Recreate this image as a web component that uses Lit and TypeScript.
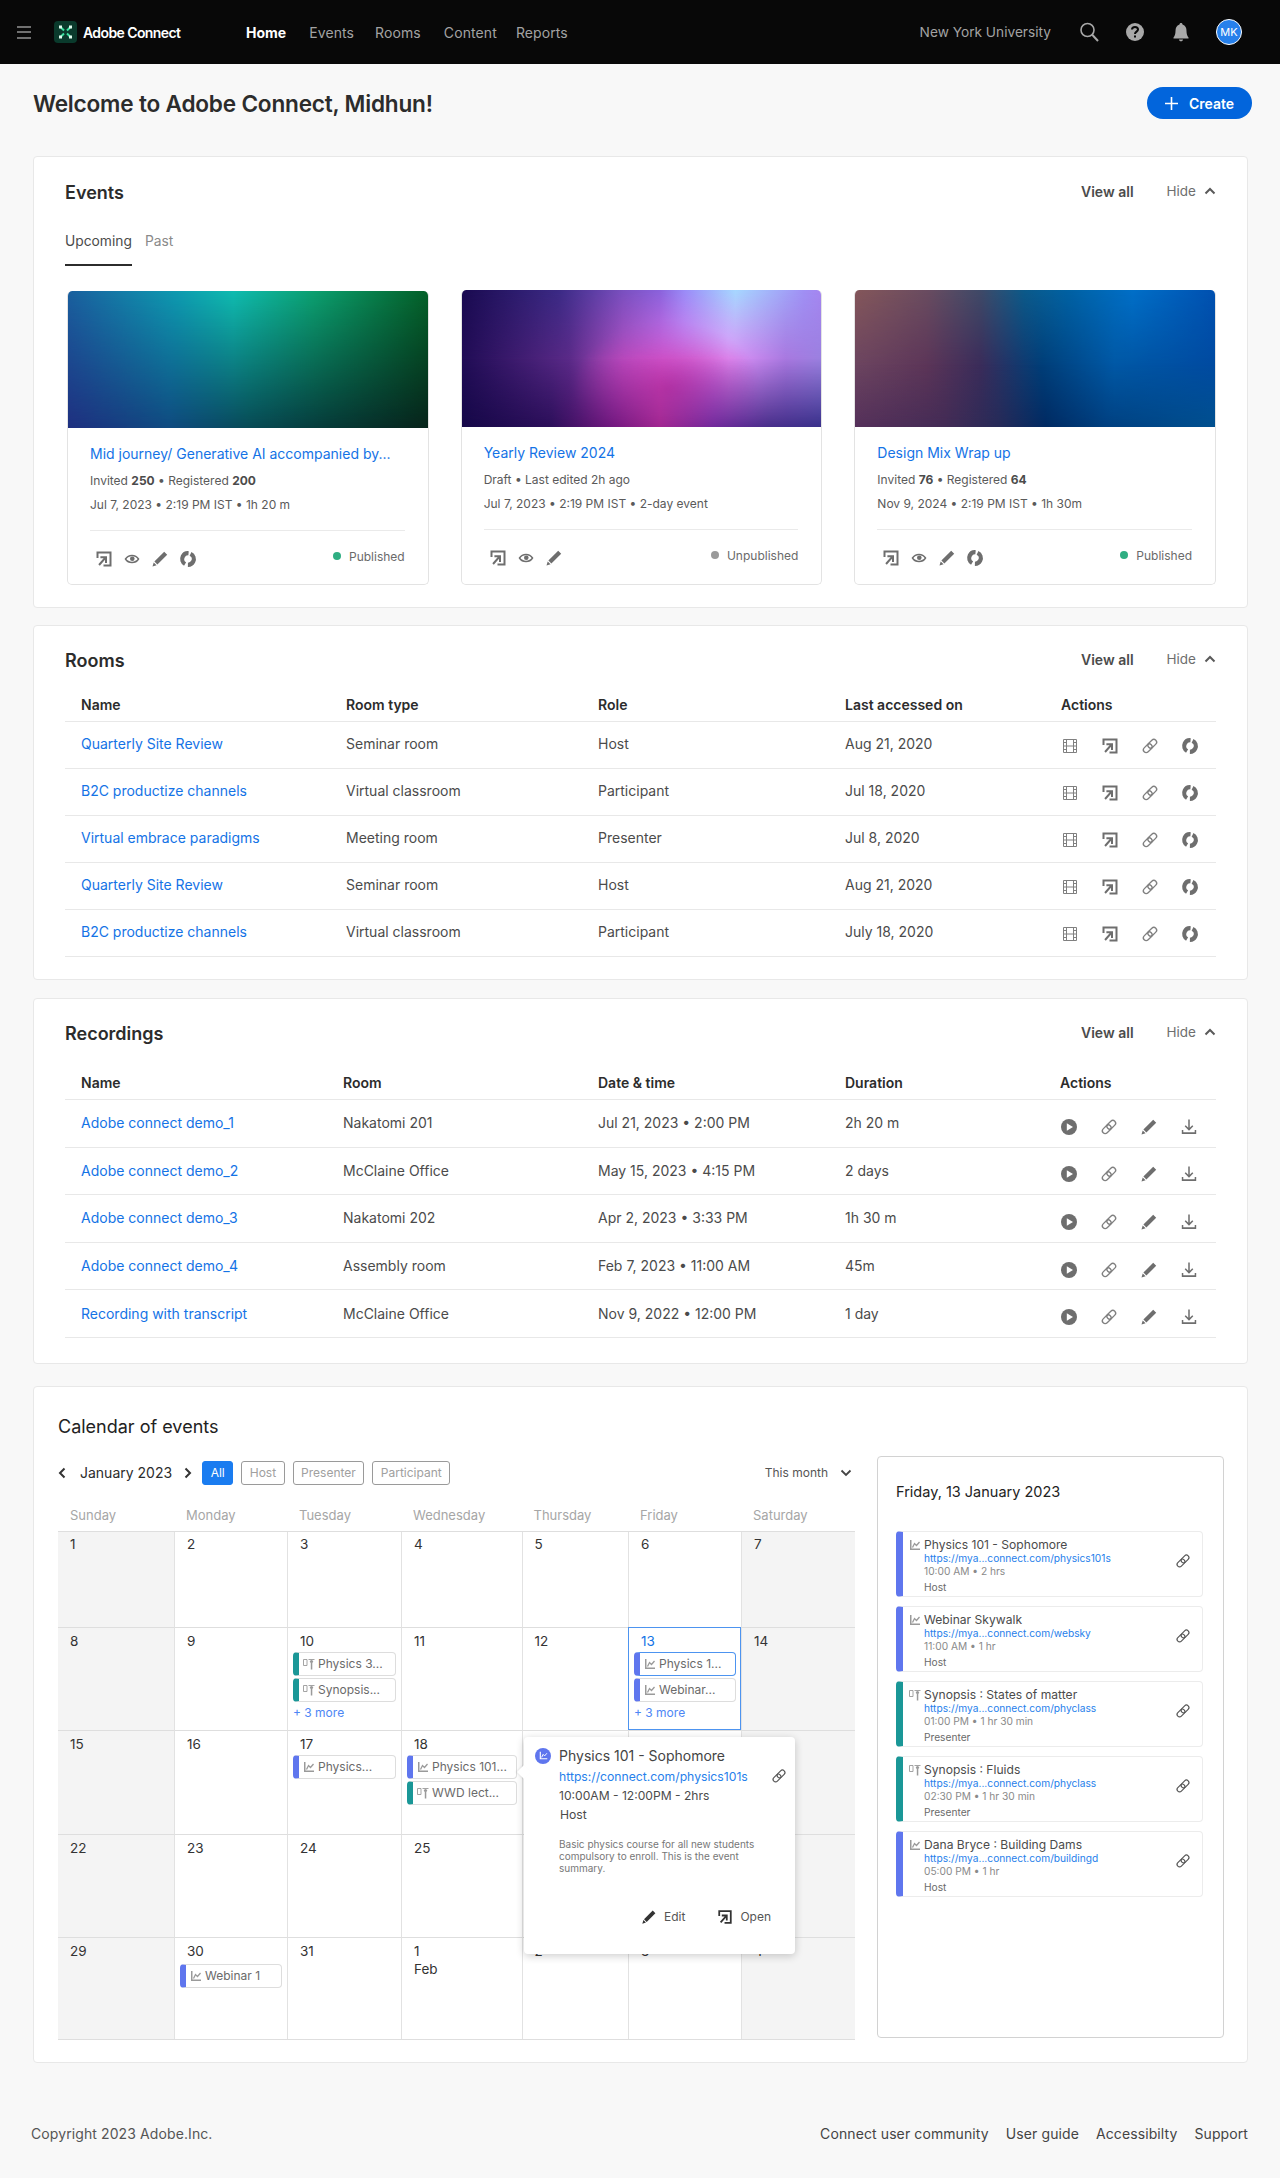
import { LitElement, html, css, svg, nothing } from "lit";
import { customElement } from "lit/decorators.js";

const ic = (body: unknown, cls = "ic") =>
  html`<svg class=${cls} viewBox="0 0 18 18" aria-hidden="true">${body}</svg>`;

const openIc = () =>
  ic(svg`<path d="M1.500 1.500h15v15H8.500v-2h6v-11h-11V8h-2z" fill="currentColor"/><path d="M12 6.300v6.700h-2V9.800l-5.200 5.900-1.500-1.400 5.300-6h-3.200v-2z" fill="currentColor"/>`);
const eyeIc = () =>
  ic(svg`<path d="M2.500 9C4 6.700 6.300 5.500 9 5.500s5 1.200 6.500 3.500C14 11.300 11.700 12.500 9 12.500S4 11.300 2.500 9z" fill="none" stroke="currentColor" stroke-width="1.500"/><circle cx="9.300" cy="8.800" r="2.300" fill="currentColor"/>`);
const pencilIc = () =>
  ic(svg`<path d="M13.200 1.800l3 3-9.800 9.800-3-3zM2.700 12.400l2.900 2.900-4.100 1.200z" fill="currentColor"/>`);
const publishIc = () =>
  ic(svg`<circle cx="9" cy="9" r="5.800" fill="none" stroke="currentColor" stroke-width="4.200" stroke-dasharray="15.200 3" transform="rotate(-64 9 9)"/>`);
const filmIc = () =>
  ic(svg`<path d="M2.500 2.500h13v13h-13zM5.500 2.500v13M12.500 2.500v13M5.500 9h7M2.500 5.500h3M2.500 9h3M2.500 12.500h3M12.500 5.500h3M12.500 9h3M12.500 12.500h3" fill="none" stroke="currentColor" stroke-width="1"/>`, "ic light");
const linkIc = (cls = "ic light") =>
  ic(svg`<g transform="rotate(-45 9 9)" fill="none" stroke="currentColor" stroke-width="1.300"><rect x="0.800" y="6.200" width="10" height="5.600" rx="2.800"/><rect x="7.200" y="6.200" width="10" height="5.600" rx="2.800"/></g>`, cls);
const playIc = () =>
  ic(svg`<circle cx="9" cy="9" r="8" fill="currentColor"/><path d="M6.800 5.200L13 9l-6.200 3.800z" fill="#fff"/>`);
const dlIc = () =>
  ic(svg`<path d="M9 1.500v10M5.200 7.800L9 11.600l3.800-3.800" fill="none" stroke="currentColor" stroke-width="1.500"/><path d="M1.800 12v4h14.400v-4h-1.500v2.200H3.300V12z" fill="currentColor"/>`);
const chartIc = () =>
  html`<svg class="ty" viewBox="0 0 12 12" aria-hidden="true"><path d="M1 1h1.500v8.500H11V11H1z" fill="currentColor"/><path d="M3.500 8.500L5.500 4.500l2 2 3-3.500" fill="none" stroke="currentColor" stroke-width="1.300"/></svg>`;
const presIc = () =>
  html`<svg class="ty" viewBox="0 0 12 12" aria-hidden="true"><path d="M.5 1.500h3.500v6H.5zM5.500 1.500h6" fill="none" stroke="currentColor" stroke-width=".9"/><circle cx="8.500" cy="3.500" r="1.600" fill="currentColor"/><path d="M7.800 5h1.500v6.500H7.800z" fill="currentColor"/></svg>`;

const rooms = [
  ["Quarterly Site Review", "Seminar room", "Host", "Aug 21, 2020"],
  ["B2C productize channels", "Virtual classroom", "Participant", "Jul 18, 2020"],
  ["Virtual embrace paradigms", "Meeting room", "Presenter", "Jul 8, 2020"],
  ["Quarterly Site Review", "Seminar room", "Host", "Aug 21, 2020"],
  ["B2C productize channels", "Virtual classroom", "Participant", "July 18, 2020"],
];
const recs = [
  ["Adobe connect demo_1", "Nakatomi 201", "Jul 21, 2023 • 2:00 PM", "2h 20 m"],
  ["Adobe connect demo_2", "McClaine Office", "May 15, 2023 • 4:15 PM", "2 days"],
  ["Adobe connect demo_3", "Nakatomi 202", "Apr 2, 2023 • 3:33 PM", "1h 30 m"],
  ["Adobe connect demo_4", "Assembly room", "Feb 7, 2023 • 11:00 AM", "45m"],
  ["Recording with transcript", "McClaine Office", "Nov 9, 2022 • 12:00 PM", "1 day"],
];
type Chip = { t: string; k: "a" | "b"; on?: boolean };
const chips: Record<string, Chip[]> = {
  "10": [{ t: "Physics 3...", k: "b" }, { t: "Synopsis...", k: "b" }],
  "13": [{ t: "Physics 1...", k: "a", on: true }, { t: "Webinar...", k: "a" }],
  "17": [{ t: "Physics...", k: "a" }],
  "18": [{ t: "Physics 101...", k: "a" }, { t: "WWD lect...", k: "b" }],
  "30": [{ t: "Webinar 1", k: "a" }],
};
const days = [
  "1","2","3","4","5","6","7","8","9","10","11","12","13","14","15","16","17","18","","","",
  "22","23","24","25","","","","29","30","31","1 Feb","2","3","4",
];
const agenda = [
  { k: "a", t: "Physics 101 - Sophomore", l: "https://mya...connect.com/physics101s", w: "10:00 AM • 2 hrs", r: "Host" },
  { k: "a", t: "Webinar Skywalk", l: "https://mya...connect.com/websky", w: "11:00 AM • 1 hr", r: "Host" },
  { k: "b", t: "Synopsis : States of matter", l: "https://mya...connect.com/phyclass", w: "01:00 PM • 1 hr 30 min", r: "Presenter" },
  { k: "b", t: "Synopsis : Fluids", l: "https://mya...connect.com/phyclass", w: "02:30 PM • 1 hr 30 min", r: "Presenter" },
  { k: "a", t: "Dana Bryce : Building Dams", l: "https://mya...connect.com/buildingd", w: "05:00 PM • 1 hr", r: "Host" },
];

@customElement("app-root")
export class AppRoot extends LitElement {
  static styles = css`
    :host { display: block; font-family: Inter, "Liberation Sans", sans-serif; background: #f8f8f8; color: #4b4b4b; height: 2178px; overflow: hidden; }
    * { box-sizing: border-box; }
    .ic { width: 18px; height: 18px; color: #6e6e6e; display: block; flex: none; }
    .ic.light { color: #808080; }
    .ty { width: 12px; height: 12px; color: #9a9a9a; flex: none; display: block; }
    a { color: #1473e6; text-decoration: none; }

    header { height: 64px; background: #080808; display: flex; align-items: center; color: #a3a3a3; font-size: 14px; }
    .burger { margin-left: 17px; width: 14px; height: 13px; border-top: 2px solid #707070; border-bottom: 2px solid #707070; position: relative; }
    .burger::after { content: ""; position: absolute; left: 0; right: 0; top: 3.5px; height: 2px; background: #707070; }
    .logo { margin-left: 23px; width: 23px; height: 22px; background: #0a3a2c; border-radius: 4px; display: block; }
    .brand { margin-left: 6px; color: #fff; font-weight: 600; font-size: 14px; letter-spacing: -.6px; width: 97px; white-space: nowrap; }
    nav { display: flex; margin-left: 66px; letter-spacing: .1px; }
    nav span { margin-right: 21px; }
    nav .on { color: #fff; font-weight: 700; margin-right: 23px; letter-spacing: 0; }
    nav span:nth-child(3) { margin-right: 23px; }
    nav span:nth-child(4) { margin-right: 19px; }
    .org { margin-left: auto; font-size: 13.700px; }
    .hi { color: #a8a8a8; width: 22px; height: 22px; display: block; flex: none; }
    .h1 { margin-left: 27px; } .h2 { margin-left: 24px; } .h3 { margin-left: 24px; }
    .avatar { margin: 0 38px 0 24px; width: 26px; height: 26px; border-radius: 50%; background: #2680eb; border: 1px solid #fff; color: #fff; font-size: 11px; display: flex; align-items: center; justify-content: center; }

    main { padding: 0 32px 0 33px; }
    .top { height: 92px; display: flex; align-items: center; justify-content: space-between; padding: 0 0 14px 0; }
    h1 { margin: 0; font-size: 22.600px; font-weight: 600; color: #2c2c2c; letter-spacing: -.2px; }
    .create { margin-right: -4px; width: 105px; height: 32px; border-radius: 16px; background: #0265dc; color: #fff; font-weight: 600; font-size: 14px; display: flex; align-items: center; padding-left: 18px; gap: 11px; }
    .create svg { width: 13px; height: 13px; display: block; }

    .card { background: #fff; border: 1px solid #e8e8e8; border-radius: 4px; padding: 23px 31px 22px 31px; margin-bottom: 17px; }
    .s-ev { padding-top: 24px; }
    .s-rm { margin-bottom: 18px; }
    .s-rc { padding-bottom: 25px; margin-bottom: 22px; }
    .hd { display: flex; align-items: center; height: 22px; }
    h2 { margin: 0; font-size: 18px; font-weight: 600; color: #2c2c2c; flex: 1; }
    .va { font-size: 14px; font-weight: 600; color: #4b4b4b; position: relative; top: -1px; }
    .hide { margin-left: 33px; font-size: 13.500px; color: #6e6e6e; display: flex; align-items: center; gap: 8px; position: relative; top: -1px; }
    .hide svg { width: 12px; height: 8px; display: block; }

    .tabs { display: flex; margin-top: 28px; font-size: 13.800px; line-height: 20px; }
    .tabs span { padding-bottom: 13px; height: 35px; margin-right: 13px; color: #8a8a8a; }
    .tabs .on { color: #4b4b4b; border-bottom: 2px solid #2c2c2c; }
    .evs { display: flex; gap: 32px; margin-top: 24px; padding: 0 0 0 2px; }
    .ev { width: 362px; height: 295px; border: 1px solid #e3e3e3; border-top: 0; border-radius: 5px; overflow: hidden; }
    .ev:first-child { margin-top: 1px; height: 294px; }
    .img { height: 137px; margin: 0 -1px; border-radius: 5px 5px 0 0; position: relative; overflow: hidden; }
    .img::before, .img::after { content: ""; position: absolute; inset: 0; }
    .img::after { -webkit-mask-image: linear-gradient(180deg, transparent 0%, #000 100%); mask-image: linear-gradient(180deg, transparent 0%, #000 100%); }
    .g1 { background: linear-gradient(90deg, #1a5f9e 0%, #0e9ab0 30%, #10bcb0 46%, #0ca070 68%, #046028 100%); }
    .g1::before { display: none; }
    .g1::after { background: linear-gradient(90deg, #1f2f80 0%, #0f4a80 28%, #074a55 50%, #063a38 72%, #07231a 100%); }
    .g2 { background: linear-gradient(90deg, #1a0a50 0%, #3b2a85 27%, #7a50c0 45%, #8a62dc 55%, #9a8cf8 62%, #a6d8ff 76%, #a090f5 95%, #a585f0 100%); }
    .g2::before { background:
      radial-gradient(ellipse 26% 50% at 57% 72%, rgba(195,58,178,1) 0%, rgba(195,58,178,0) 100%),
      linear-gradient(90deg, #200c55 0%, #5a2a88 30%, #b04fc0 45%, #d86ae0 56%, #e094f8 74%, #a878e0 90%, #9a80e0 100%);
      -webkit-mask-image: linear-gradient(180deg, transparent 0%, #000 50%); mask-image: linear-gradient(180deg, transparent 0%, #000 50%); }
    .g2::after { background: linear-gradient(90deg, #150848 0%, #2c0f5a 25%, #72187f 42%, #a0258f 55%, #70289a 70%, #482e8a 85%, #38308a 100%);
      -webkit-mask-image: linear-gradient(180deg, transparent 50%, #000 100%); mask-image: linear-gradient(180deg, transparent 50%, #000 100%); }
    .g3 { background: linear-gradient(90deg, #85575a 0%, #6a4c60 20%, #3f4a68 35%, #0c5a8a 47%, #0062a5 60%, #006fc8 77%, #0050b0 100%); }
    .g3::before { background: linear-gradient(90deg, #6c4560 0%, #5c3558 20%, #3a2c5a 35%, #0f3a70 47%, #003e78 52%, #0058a5 72%, #004aa0 100%);
      -webkit-mask-image: linear-gradient(180deg, transparent 0%, #000 55%); mask-image: linear-gradient(180deg, transparent 0%, #000 55%); }
    .g3::after { background: linear-gradient(90deg, #55305a 0%, #432b55 25%, #262a58 40%, #002a62 53%, #004080 70%, #00508f 100%);
      -webkit-mask-image: linear-gradient(180deg, transparent 55%, #000 100%); mask-image: linear-gradient(180deg, transparent 55%, #000 100%); }
    .evb { padding: 16px 23px 0 22px; }
    .ti { font-size: 14px; line-height: 20px; color: #1473e6; white-space: nowrap; }
    .l1, .l2 { font-size: 12px; line-height: 16px; color: #5a5a5a; white-space: nowrap; }
    .l1 { margin-top: 9px; } .l2 { margin-top: 8px; }
    .l1 b { font-weight: 700; color: #4b4b4b; }
    .div { height: 1px; background: #eaeaea; margin-top: 17px; }
    .foot { display: flex; align-items: center; margin-top: 19px; height: 18px; padding-left: 5px; gap: 10px; }
    .st { margin-left: auto; font-size: 12px; color: #6a6a6a; display: flex; align-items: center; gap: 8px; position: relative; top: -3px; }
    .st i { width: 8px; height: 8px; border-radius: 50%; background: #2fae82; }
    .st.off i { background: #9a9a9a; }

    .tbl { font-size: 14px; }
    .r { display: grid; align-items: center; padding-left: 16px; padding-bottom: 3px; border-bottom: 1px solid #e8e8e8; height: 47px; white-space: nowrap; color: #4b4b4b; }
    .rooms .r { grid-template-columns: 265px 252px 247px 216px 1fr; }
    .recs .r { grid-template-columns: 262px 255px 247px 215px 1fr; height: 47.600px; padding-bottom: 1px; }
    .r.th { height: 29px; padding-top: 2px; padding-bottom: 0; align-items: start; font-weight: 600; color: #2c2c2c; font-size: 14px; line-height: 20px; }
    .rooms .r.th, .recs .r.th { height: 29px; padding-bottom: 0; }
    .rooms { margin-top: 22px; } .recs { margin-top: 27px; }
    .acts { display: flex; gap: 22px; }
    .recs .acts { padding-top: 8px; }
    .rooms .acts { padding-top: 5px; }

    .cal { padding: 29px 23px 22px 24px; margin-bottom: 0; }
    .cal h3 { margin: 0; font-size: 18px; font-weight: 400; line-height: 22px; color: #222; }
    .cols { display: flex; margin-top: 18px; gap: 22px; }
    .left { width: 797px; padding-top: 5px; position: relative; }
    .bar { display: flex; align-items: center; height: 24px; font-size: 14px; color: #2c2c2c; }
    .bar .chev { width: 8px; height: 12px; display: block; flex: none; }
    .bar .m { margin: 0 12px 0 14px; white-space: nowrap; }
    .f { height: 24px; border: 1px solid #9a9a9a; border-radius: 3px; font-size: 12px; line-height: 22px; padding: 0 7.500px; color: #a0a0a0; margin-right: 8px; }
    .f.on { background: #1a7cf0; border-color: #1a7cf0; color: #fff; margin-left: 10px; }
    .tm { margin-left: auto; font-size: 12px; color: #555; display: flex; align-items: center; gap: 12px; margin-right: 3px; }
    .tm svg { width: 12px; height: 8px; display: block; }
    .wk, .grid { display: grid; grid-template-columns: 116px 113px 114px 120.500px 106.500px 113px 114px; }
    .wk { height: 46px; align-items: end; padding-bottom: 8px; font-size: 13px; line-height: 16px; color: #a6a6a6; }
    .wk span { padding-left: 12px; }
    .grid { grid-template-rows: 95px 103px 104px 103px 102px; border-top: 1px solid #dedede; border-bottom: 1px solid #dedede; border-right: 1px solid #dedede; }
    .c { border-left: 1px solid #e2e2e2; border-top: 1px solid #dedede; padding: 4px 5px 0; font-size: 13.500px; color: #333; position: relative; min-width: 0; }
    .c:nth-child(-n+7) { padding-top: 3px; border-top: 0; }
    .c:nth-last-child(-n+7) { padding-top: 4px; }
    .c:nth-last-child(-n+7) .chip { margin-top: 4px; }
    .c:nth-child(7n+1) { border-left: 0; background: #f4f4f4; }
    .c:nth-child(7n) { background: #f4f4f4; }
    .n { line-height: 18px; min-height: 18px; padding-left: 7px; }
    .c.sel { outline: 1.500px solid #4d94f0; outline-offset: -1px; }
    .c.sel .n { color: #1473e6; }
    .chip { height: 24px; margin-top: 2px; border: 1px solid #ddd; border-radius: 4px; border-left: 6px solid; display: flex; align-items: center; gap: 3px; padding-left: 4px; font-size: 12px; color: #6a6a6a; white-space: nowrap; overflow: hidden; background: #fff; }
    .chip.a { border-left-color: #5f76ee; } .chip.b { border-left-color: #1a9797; }
    .chip.on { border-top-color: #4d94f0; border-right-color: #4d94f0; border-bottom-color: #4d94f0; }
    .more { font-size: 12px; line-height: 16px; margin-top: 3px; color: #4d86f5; }

    .pop { position: absolute; left: 466px; top: 281px; width: 271px; height: 217px; background: #fff; border-radius: 4px; box-shadow: 0 2px 8px rgba(0,0,0,.2); padding: 9px 0 0 35px; font-size: 12.500px; color: #4b4b4b; }
    .pop::before { content: ""; position: absolute; left: -5px; top: 30px; width: 10px; height: 10px; background: #fff; transform: rotate(45deg); box-shadow: -1px 1px 2px rgba(0,0,0,.08); }
    .pop > * { position: relative; }
    .pop .dot { position: absolute; left: 11px; top: 11px; width: 16px; height: 16px; border-radius: 50%; background: #5f76ee; display: flex; align-items: center; justify-content: center; }
    .dot .ty { width: 9px; height: 9px; color: #fff; }
    .pt { font-size: 14px; line-height: 20px; color: #444; white-space: nowrap; margin-bottom: 1px; }
    .pl { line-height: 19px; color: #2680eb; font-size: 12.200px; white-space: nowrap; }
    .pw { line-height: 19px; font-size: 12.100px; }
    .ph { line-height: 19px; padding-left: 1px; font-size: 12.200px; }
    .pd { margin-top: 14px; width: 205px; font-size: 10px; line-height: 12px; color: #777; }
    .pop .pk { position: absolute; right: 8px; top: 31px; color: #555; width: 16px; height: 16px; }
    .pop .pa { position: absolute; left: 117px; top: 172px; display: flex; align-items: center; font-size: 12px; color: #555; }
    .pa .ic { width: 16px; height: 16px; color: #333; }
    .pa span { margin-left: 7px; }
    .pa .e { margin-right: 32px; }

    .panel { width: 348px; height: 582px; border: 1px solid #d2d2d2; border-radius: 4px; padding: 25px 20px 0 18px; }
    .panel h4 { margin: 0; font-size: 14.500px; font-weight: 400; line-height: 20px; color: #222; }
    .items { margin-top: 29px; display: flex; flex-direction: column; gap: 9px; }
    .it { height: 66px; border: 1px solid #ececec; border-left: 7px solid; border-radius: 4px; display: flex; padding: 5px 0 0 6px; position: relative; }
    .it.a { border-left-color: #5f76ee; } .it.b { border-left-color: #1a9797; }
    .it .ty { margin-top: 2px; }
    .tx { margin-left: 3px; }
    .it .t { font-size: 12.100px; line-height: 16px; color: #4b4b4b; white-space: nowrap; }
    .it .u { font-size: 10.200px; line-height: 11px; color: #2680eb; white-space: nowrap; }
    .it .w { font-size: 10.200px; line-height: 13px; margin-top: 1px; color: #8a8a8a; white-space: nowrap; }
    .it .o { font-size: 10.200px; line-height: 14px; margin-top: 2px; color: #6a6a6a; }
    .it .lk { position: absolute; right: 11px; top: 21px; width: 16px; height: 16px; color: #555; }

    footer { margin-top: 61px; display: flex; justify-content: space-between; font-size: 14px; letter-spacing: .1px; line-height: 20px; margin-left: -2px; color: #555; }
    footer div { display: flex; gap: 17px; color: #444; }
  `;

  private section(cls: string, title: string, body: unknown) {
    return html`<section class="card ${cls}">
      <div class="hd"><h2>${title}</h2><span class="va">View all</span>
        <span class="hide">Hide <svg viewBox="0 0 12 8"><path d="M1.500 6.500L6 2l4.500 4.500" fill="none" stroke="#5a5a5a" stroke-width="2"/></svg></span></div>
      ${body}</section>`;
  }

  private evCard(g: string, title: string, l1: unknown, l2: string, status: string, icons: unknown[]) {
    return html`<article class="ev">
      <div class="img ${g}"></div>
      <div class="evb">
        <div class="ti">${title}</div>
        <div class="l1">${l1}</div>
        <div class="l2">${l2}</div>
        <div class="div"></div>
        <div class="foot">${icons}
          <span class="st ${status === "Unpublished" ? "off" : ""}"><i></i>${status}</span></div>
      </div></article>`;
  }

  render() {
    return html`
      <header>
        <div class="burger"></div>
        <svg class="logo" viewBox="0 0 23 22" aria-hidden="true"><path d="M6.500 6l3.500 3.500M16.500 6L13 9.500M6.500 16l3.500-3.500M16.500 16L13 12.500" stroke="#3ce0a0" stroke-width="2" fill="none"/><path d="M5 4.500h3v3H5zM15 4.500h3v3h-3zM5 14.500h3v3H5zM15 14.500h3v3h-3z" fill="#dffbee"/></svg>
        <span class="brand">Adobe Connect</span>
        <nav><span class="on">Home</span><span>Events</span><span>Rooms</span><span>Content</span><span>Reports</span></nav>
        <span class="org">New York University</span>
        <svg class="hi h1" viewBox="0 0 22 22" aria-hidden="true"><circle cx="9.500" cy="9" r="6.500" fill="none" stroke="currentColor" stroke-width="1.600"/><path d="M14.200 13.700L20 20" stroke="currentColor" stroke-width="2"/></svg>
        <svg class="hi h2" viewBox="0 0 22 22" aria-hidden="true"><circle cx="11" cy="11" r="9" fill="currentColor"/><path d="M8 8.500C8 6.700 9.300 6 11 6s3 1 3 2.500c0 2-3 2.300-3 4.500" fill="none" stroke="#080808" stroke-width="2"/><rect x="10" y="14.500" width="2" height="2" fill="#080808"/></svg>
        <svg class="hi h3" viewBox="0 0 22 22" aria-hidden="true"><path d="M11 2c1 0 1.500.7 1.500 1.500C15.500 4.300 16.500 7 16.500 10c0 3 .7 5 2 6.500v1h-15v-1c1.300-1.500 2-3.500 2-6.500 0-3 1-5.700 4-6.500C9.500 2.700 10 2 11 2zM9 18.500h4c0 1-.9 1.800-2 1.800S9 19.500 9 18.500z" fill="currentColor"/></svg>
        <span class="avatar">MK</span>
      </header>
      <main>
        <div class="top"><h1>Welcome to Adobe Connect, Midhun!</h1>
          <span class="create"><svg viewBox="0 0 13 13"><path d="M6.500 0v13M0 6.500h13" stroke="#fff" stroke-width="1.600"/></svg>Create</span></div>

        ${this.section("s-ev", "Events", html`
          <div class="tabs"><span class="on">Upcoming</span><span>Past</span></div>
          <div class="evs">
            ${this.evCard("g1", "Mid journey/ Generative AI accompanied by...", html`Invited <b>250</b> • Registered <b>200</b>`, "Jul 7, 2023 • 2:19 PM IST • 1h 20 m", "Published", [openIc(), eyeIc(), pencilIc(), publishIc()])}
            ${this.evCard("g2", "Yearly Review 2024", "Draft • Last edited 2h ago", "Jul 7, 2023 • 2:19 PM IST • 2-day event", "Unpublished", [openIc(), eyeIc(), pencilIc()])}
            ${this.evCard("g3", "Design Mix Wrap up", html`Invited <b>76</b> • Registered <b>64</b>`, "Nov 9, 2024 • 2:19 PM IST • 1h 30m", "Published", [openIc(), eyeIc(), pencilIc(), publishIc()])}
          </div>`)}

        ${this.section("s-rm", "Rooms", html`<div class="tbl rooms">
          <div class="r th"><span>Name</span><span>Room type</span><span>Role</span><span>Last accessed on</span><span>Actions</span></div>
          ${rooms.map((r) => html`<div class="r"><a>${r[0]}</a><span>${r[1]}</span><span>${r[2]}</span><span>${r[3]}</span>
            <span class="acts">${filmIc()}${openIc()}${linkIc()}${publishIc()}</span></div>`)}
        </div>`)}

        ${this.section("s-rc", "Recordings", html`<div class="tbl recs">
          <div class="r th"><span>Name</span><span>Room</span><span>Date &amp; time</span><span>Duration</span><span>Actions</span></div>
          ${recs.map((r) => html`<div class="r"><a>${r[0]}</a><span>${r[1]}</span><span>${r[2]}</span><span>${r[3]}</span>
            <span class="acts">${playIc()}${linkIc()}${pencilIc()}${dlIc()}</span></div>`)}
        </div>`)}

        <section class="card cal">
          <h3>Calendar of events</h3>
          <div class="cols">
            <div class="left">
              <div class="bar">
                <svg class="chev" viewBox="0 0 8 12"><path d="M6.500 1.500L2 6l4.500 4.500" fill="none" stroke="#333" stroke-width="2"/></svg>
                <span class="m">January 2023</span>
                <svg class="chev" viewBox="0 0 8 12"><path d="M1.500 1.500L6 6l-4.500 4.500" fill="none" stroke="#333" stroke-width="2"/></svg>
                <span class="f on">All</span><span class="f">Host</span><span class="f">Presenter</span><span class="f">Participant</span>
                <span class="tm">This month <svg viewBox="0 0 12 8"><path d="M1.500 1.500L6 6l4.500-4.500" fill="none" stroke="#444" stroke-width="1.800"/></svg></span>
              </div>
              <div class="wk">${["Sunday","Monday","Tuesday","Wednesday","Thursday","Friday","Saturday"].map((d) => html`<span>${d}</span>`)}</div>
              <div class="grid">
                ${days.map((d, i) => {
                  const key = i > 28 ? (d === "30" ? "30" : "") : d;
                  const list = chips[key] || [];
                  return html`<div class="c ${d === "13" ? "sel" : ""}">
                    <div class="n">${d.includes(" ") ? html`1<br />Feb` : d}</div>
                    ${list.map((c) => html`<div class="chip ${c.k} ${c.on ? "on" : ""}">${c.k === "a" ? chartIc() : presIc()}<span>${c.t}</span></div>`)}
                    ${d === "10" || d === "13" ? html`<div class="more">+ 3 more</div>` : nothing}
                  </div>`;
                })}
              </div>
              <div class="pop">
                <span class="dot">${chartIc()}</span>
                <div class="pt">Physics 101 - Sophomore</div>
                <div class="pl">https://connect.com/physics101s</div>
                <div class="pw">10:00AM - 12:00PM - 2hrs</div>
                <div class="ph">Host</div>
                <div class="pd">Basic physics course for all new students compulsory to enroll. This is the event summary.</div>
                ${linkIc("ic pk")}
                <div class="pa">${pencilIc()}<span class="e">Edit</span>${openIc()}<span>Open</span></div>
              </div>
            </div>
            <aside class="panel">
              <h4>Friday, 13 January 2023</h4>
              <div class="items">
                ${agenda.map((a) => html`<div class="it ${a.k}">${a.k === "a" ? chartIc() : presIc()}
                  <div class="tx"><div class="t">${a.t}</div><div class="u">${a.l}</div><div class="w">${a.w}</div><div class="o">${a.r}</div></div>
                  ${linkIc("ic lk")}</div>`)}
              </div>
            </aside>
          </div>
        </section>

        <footer><span>Copyright 2023 Adobe.Inc.</span>
          <div><span>Connect user community</span><span>User guide</span><span>Accessibilty</span><span>Support</span></div></footer>
      </main>`;
  }
}
